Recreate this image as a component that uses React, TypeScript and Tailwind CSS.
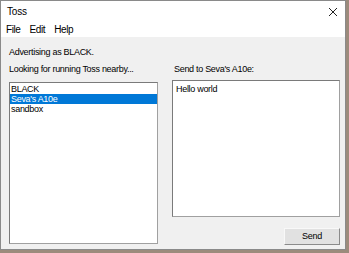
import React from "react";

const font = { fontFamily: '"Liberation Sans", Arial, sans-serif' };

export default function App() {
  return (
    <div className="w-[349px] h-[253px] bg-[#9c8b7c] overflow-hidden" style={font}>
      <div className="w-[346px] h-[250px] border border-[#8a8a8a] bg-[#f0f0f0] flex flex-col text-[9px] tracking-[-0.3px] text-black">
        <div className="h-[20px] bg-white flex items-center justify-between pl-[6px] pr-[6px] pt-[1px]">
          <span className="text-[10px] tracking-[-0.2px]">Toss</span>
          <svg width="10" height="10" viewBox="0 0 10 10" className="mr-[1px]">
            <path d="M1 1 L9 9 M9 1 L1 9" stroke="#222" strokeWidth="1" />
          </svg>
        </div>
        <div className="h-[16px] bg-white flex items-center gap-[9px] pl-[5px] text-[10px] tracking-[-0.4px]">
          <span>File</span>
          <span>Edit</span>
          <span>Help</span>
        </div>
        <div className="flex-1 flex flex-col pl-[8px] pr-[5px] pt-[9px]">
          <div className="h-[12px] leading-[12px]">Advertising as BLACK.</div>
          <div className="flex gap-[14px] mt-[5px] flex-1">
            <div className="w-[149px] flex flex-col">
              <div className="h-[12px] leading-[12px]">Looking for running Toss nearby...</div>
              <div className="mt-[7px] h-[162px] bg-white border border-[#a0a0a0] border-l-[#7a7a7a] border-t-[#7a7a7a] pt-[1px]">
                <div className="h-[10px] leading-[10px] px-[1px]">BLACK</div>
                <div className="h-[10px] leading-[10px] px-[1px] bg-[#0078d7] text-white">Seva's A10e</div>
                <div className="h-[10px] leading-[10px] px-[1px]">sandbox</div>
              </div>
            </div>
            <div className="flex-1 flex flex-col">
              <div className="h-[12px] leading-[12px] pl-[2px]">Send to Seva's A10e:</div>
              <div className="mt-[5px] h-[137px] bg-white border border-[#a0a0a0] border-l-[#7a7a7a] border-t-[#7a7a7a] px-[3px] pt-[3px] leading-[10px]">
                Hello world
              </div>
              <div className="flex justify-end mt-[11px]">
                <div className="w-[56px] h-[17px] bg-[#e1e1e1] border border-[#f8f8f8] border-r-[#8a8a8a] border-b-[#8a8a8a] flex items-center justify-center">
                  Send
                </div>
              </div>
            </div>
          </div>
        </div>
      </div>
    </div>
  );
}
